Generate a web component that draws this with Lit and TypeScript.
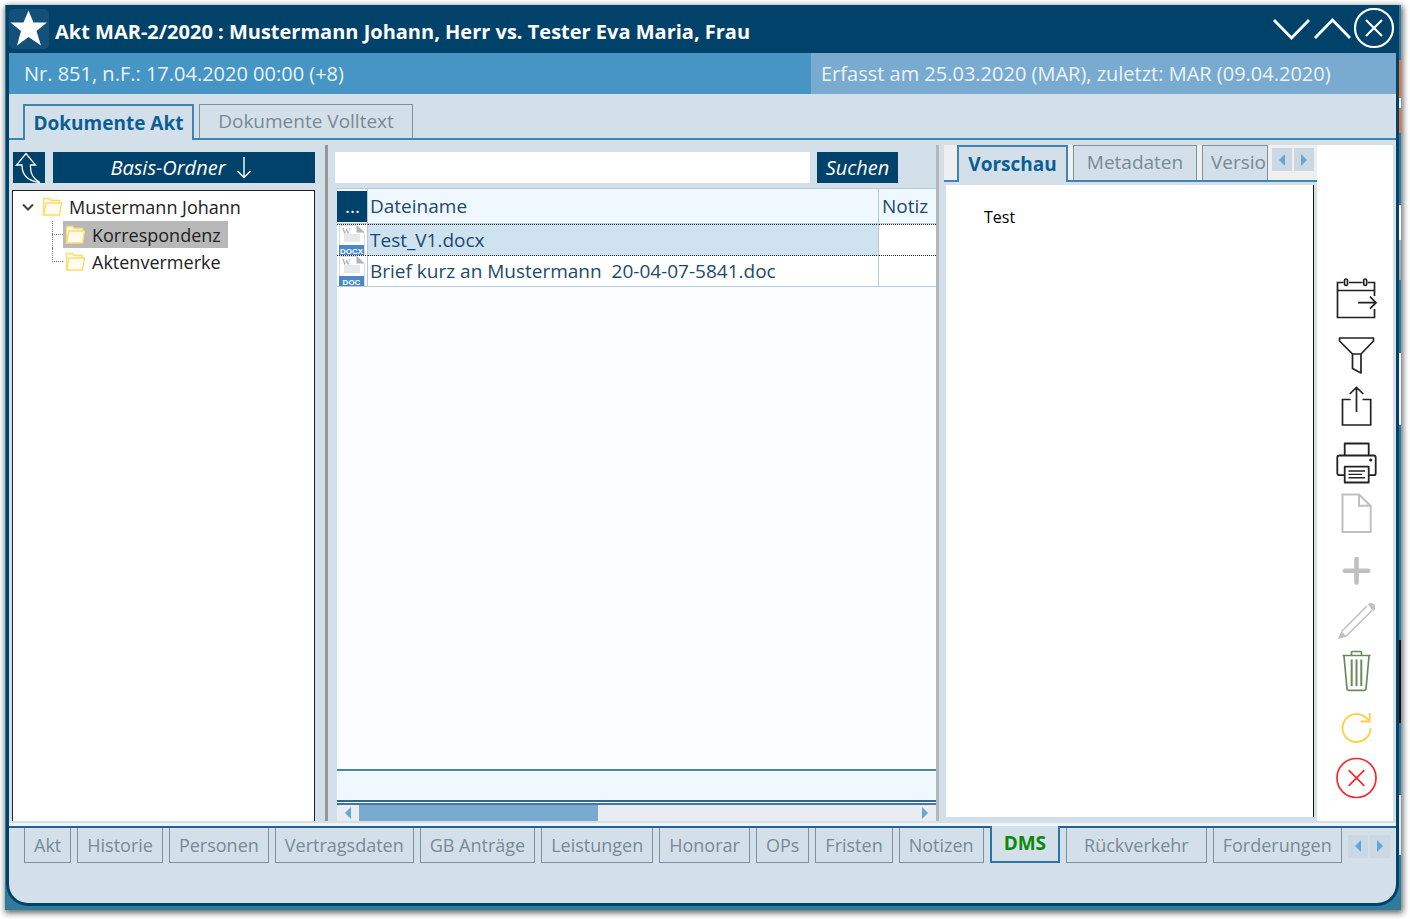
import { LitElement, html, css, svg } from "lit";
import { customElement, state } from "lit/decorators.js";
import { classMap } from "lit/directives/class-map.js";

const toolIcons = {
  calendar: svg`<g fill="none" stroke="#222" stroke-width="1.7"><path d="M12.5 9.500H6.500V44.500H43.500V36M18 9.500H31.500M37 9.500H43.500V23M6.500 17.500H43.500M27 29.700H45M39 23.700l6 6-6 6"/><rect x="13.500" y="6" width="3" height="6.500" rx="1.500"/><rect x="32.700" y="6" width="3" height="6.500" rx="1.500"/></g>`,
  filter: svg`<g fill="none" stroke="#222" stroke-width="1.700" stroke-linejoin="round"><path d="M8.500 8H42.500V11L30 24V43L21.500 38.500V24L8.500 11ZM21.500 24H30"/></g>`,
  share: svg`<g fill="none" stroke="#222" stroke-width="1.700"><path d="M19.700 19.500H11.500V45H39.700V19.500H31.500M25.500 32V7.500M18.700 14l6.800-6.500 6.800 6.500"/></g>`,
  print: svg`<g fill="none" stroke="#222" stroke-width="1.800" stroke-linejoin="round"><path d="M13.700 18.300V6.500H37.700V18.300M13.700 38.200H8.300a2 2 0 0 1-2-2V20.500a2 2 0 0 1 2-2H42.700a2 2 0 0 1 2 2V36.200a2 2 0 0 1-2 2H37.700"/><rect x="13.700" y="29.700" width="24" height="15.800"/><path d="M17.500 34H34M17.500 37.400H31M17.500 40.800H34" stroke-width="1.400"/></g><circle cx="39.700" cy="23" r="1.600" fill="#222"/>`,
  file: svg`<path d="M11.500 7.500H28L39.700 19V45H11.500ZM28 7.500V18.700H39.700" fill="none" stroke="#c0c0c0" stroke-width="2"/>`,
  add: svg`<path d="M25.500 15V38.500M13.800 26.700H37.200" fill="none" stroke="#c0c0c0" stroke-width="4.600" stroke-linecap="round"/>`,
  edit: svg`<path d="M10.500 37.500L36 12M14.700 42.500L41 16.500" fill="none" stroke="#c0c0c0" stroke-width="1.600"/><path d="M7 45l3.200-8 2.300 2.200 1.200 1.200 1.500 2.300ZM37 10.500c2.500-3.500 9.500 0 6.500 5.500l-1.500 1.500L39 13Z" fill="#c0c0c0"/>`,
  trash: svg`<g fill="none" stroke="#6c8a58" stroke-width="1.700"><path d="M11.500 11.500H39.700M20.500 11V8.500a1 1 0 0 1 1-1H29.500a1 1 0 0 1 1 1V11M13 12L16 45a1.500 1.500 0 0 0 1.500 1.300H33.500a1.500 1.500 0 0 0 1.500-1.300L38 12"/><path d="M20.700 15.500V42M25.500 15.500V42M30.300 15.500V42" stroke-width="2"/></g>`,
  refresh: svg`<path d="M39.500 27A14 14 0 1 1 35.500 17.200L38.500 20.200M38.700 12V20.500H29.500" fill="none" stroke="#fdd04c" stroke-width="1.900"/>`,
  cancel: svg`<g fill="none" stroke="#f8282c" stroke-width="1.700"><circle cx="25.500" cy="27" r="19.500"/><path d="M17.700 19.200L33.300 34.800M33.300 19.200L17.700 34.800"/></g>`,
};

const tools: { id: keyof typeof toolIcons; label: string; spaced?: boolean }[] = [
  { id: "calendar", label: "Frist" },
  { id: "filter", label: "Filter", spaced: true },
  { id: "share", label: "Export" },
  { id: "print", label: "Drucken", spaced: true },
  { id: "file", label: "Neu" },
  { id: "add", label: "Hinzu", spaced: true },
  { id: "edit", label: "Bearbeiten" },
  { id: "trash", label: "Entfernen" },
  { id: "refresh", label: "Aktualisieren", spaced: true },
  { id: "cancel", label: "Abbrechen" },
];

const sections = ["Akt", "Historie", "Personen", "Vertragsdaten", "GB Anträge", "Leistungen", "Honorar", "OPs", "Fristen", "Notizen", "DMS", "Rückverkehr", "Forderungen"];

const folder = html`<svg class="folder" viewBox="0 0 22 20" aria-hidden="true">
  <path d="M2.500 18V1.500H8.500L10.500 3.500H18.500V6" fill="#fffdf0" stroke="#ffdc66" stroke-width="1.400"/>
  <path d="M2.500 18L5 6H20.500L18.500 18Z" fill="#fffdf0" stroke="#ffdc66" stroke-width="1.400"/></svg>`;

const doc = (kind: string) => html`<svg class="doc" viewBox="0 0 26 30" role="img" aria-label=${kind}>
  <path d="M.5 30V.5H18L25.500 8V30" fill="#fff" stroke="#d8dde2"/>
  <path d="M17.500 0V7.500H25.500Z" fill="#aeb4b8"/>
  <rect x="5" y="9" width="16" height="8" fill="#e6e9e9"/>
  <text x="3" y="9" class="doc-w">W</text>
  <rect x="0" y="20" width="25" height="10" fill="#4a88cb"/>
  <text x="12.500" y="28.500" text-anchor="middle" class="doc-kind">${kind}</text></svg>`;

const pager = html`<div class="pager">
  <button aria-label="Zurück"><svg viewBox="0 0 6 12"><path d="M6 0V12L0 6Z"/></svg></button>
  <button aria-label="Weiter"><svg viewBox="0 0 6 12"><path d="M0 0V12L6 6Z"/></svg></button></div>`;

@customElement("app-root")
export class AppRoot extends LitElement {
  @state() private section = "DMS";

  static styles = css`
    :host { display: block; box-sizing: border-box; height: 100vh; min-height: 600px; padding: 5px 9px 9px 5px; background: #fff; font: 19px/26px "Open Sans", "Noto Sans", sans-serif; color: #1b4a70; }
    * { box-sizing: border-box; }
    button { font: inherit; color: inherit; border: 0; padding: 0; margin: 0; background: none; white-space: nowrap; }
    svg { display: block; }
    .backdrop { height: 100%; padding: 0 2px 4px 1px; box-shadow: 1px 2px 6px 1px rgba(0,0,0,.6);
      background: linear-gradient(#2f7c9b 55px, #f0702c 55px 93px, #fff 93px 103px, #f0702c 103px 128px, #2f7c9b 128px 200px, #fff 200px 235px, #9aa9b2 235px 275px, #2f7c9b 275px 348px, #f2f4f6 348px 420px, #2f7c9b 420px 635px, #111 635px 718px, #2f7c9b 718px 790px, #e2e7ec 790px 850px, #2f7c9b 850px) right / 2px 100% no-repeat, #2f7c9b; }
    .window { height: 100%; display: flex; flex-direction: column; border: solid #01426a; border-width: 0 3px 3px; border-radius: 0 0 22px 22px; background: #d4e0e9; overflow: hidden; }
    .title { flex: none; height: 48px; background: #01426a; display: flex; align-items: center; color: #fff; }
    .title h1 { flex: 1; margin: 6px 0 0 6px; font-size: 20px; font-weight: 700; line-height: 26px; white-space: nowrap; }
    .star { width: 40px; height: 40px; border-radius: 5px; background: #13507a; }
    .controls { display: flex; align-items: center; }
    .info { flex: none; display: grid; grid-template-columns: 802fr 585fr; height: 41px; line-height: 41px; font-size: 20px; color: #eaf4fc; background: #4695c5; }
    .info span { padding-left: 15px; white-space: nowrap; }
    .info span + span { background: #79abd1; padding-left: 10px; }
    .tabs { flex: none; display: flex; align-items: flex-end; gap: 5px; }
    .main-tabs { height: 46px; padding: 0 14px; border-bottom: 2px solid #3f85b2; }
    .tab { flex: none; border: 1px solid #80919c; border-bottom: 0; color: #788a96; text-align: center; }
    .main-tabs .tab { height: 34px; width: 214px; padding-bottom: 1px; }
    .main-tabs .tab.on { width: 171px; height: 36px; margin-bottom: -2px; }
    .tab.on { border: 2px solid #3f85b2; border-bottom: 0; background: #d4e0e9; color: #0b5e94; font-weight: 700; }
    .body { flex: 1; min-height: 0; display: flex; padding: 5px 3px 0 0; }
    .left { flex: none; width: 316px; padding: 7px 10px 0 3px; display: flex; flex-direction: column; gap: 7px; }
    .left-bar { display: flex; gap: 8px; padding-left: 1px; }
    .dark { height: 31px; background: #01426a; color: #fff; font-style: italic; font-size: 20px; }
    .up { width: 32px; }
    .base { flex: 1; display: flex; align-items: center; justify-content: center; gap: 10px; padding-right: 6px; }
    .tree { flex: 1; margin: 0; padding: 2px 0 0 8px; list-style: none; background: #fff; border: solid #222; border-width: 1px 1px 0; color: #222; font-size: 18px; }
    .tree ul { margin: 0; padding: 0 0 0 31px; list-style: none; }
    .node { display: flex; align-items: center; height: 27px; gap: 6px; }
    .tree > li > .node { height: 28px; }
    .node svg { flex: none; }
    .folder { width: 22px; height: 20px; }
    .branch { position: relative; display: flex; align-items: center; }
    .branch::before { content: ""; width: 11px; border-top: 1px dotted #777; }
    .branch::after { content: ""; position: absolute; left: 0; top: 0; height: 27px; border-left: 1px dotted #777; }
    .branch:last-child::after { height: 14px; }
    .branch .node { padding: 0 7px 0 1px; }
    .branch .node.sel { background: #b8b8b8; }
    .split { flex: none; width: 3px; background: #969696; }
    .split.soft { background: #b4b8bb; }
    .center { flex: 1; min-width: 0; padding: 7px 0 0 7px; display: flex; flex-direction: column; }
    .search { display: flex; gap: 7px; padding-right: 38px; margin-bottom: 5px; }
    .search input { flex: 1; min-width: 0; height: 31px; border: 0; padding: 0 6px; background: #fff; font: inherit; border-radius: 0; }
    .find { width: 81px; }
    .grid { flex: 1; min-height: 0; margin-left: 2px; background: #fbfcff; display: flex; flex-direction: column; }
    table { width: 100%; border-collapse: separate; border-spacing: 0; table-layout: fixed; }
    th, td { padding: 0 0 0 2px; text-align: left; font-weight: 400; height: 31px; border-right: 1px solid #b5cbdc; border-bottom: 1px solid #b5cbdc; background: #fff; white-space: nowrap; overflow: hidden; line-height: 26px; }
    th { background: #f0f8ff; height: 36px; border-top: 1px solid #b5cbdc; }
    th:last-child, td:last-child { border-right: 0; }
    th:first-child, td:first-child { width: 31px; padding: 0; }
    th:last-child { width: 57px; padding-left: 3px; }
    .file { white-space: pre; }
    .more { width: 31px; height: 31px; background: #01426a; color: #fff; display: block; }
    .active td { border-bottom: 1px dotted #222; border-top: 1px dotted #222; }
    .active .file { background: #cfe2f0; }
    .doc { width: 26px; height: 30px; margin-left: 2px; }
    .doc-w { font: 9px "Liberation Serif", serif; fill: #999; }
    .doc-kind { font: 700 8px "Liberation Sans", sans-serif; fill: #fff; }
    .sum { margin-top: auto; height: 33px; border-top: 2px solid #4b86a6; border-bottom: 2px solid #2e6796; background: #f0f8ff; }
    .scroll { height: 18px; margin-top: 1px; border-top: 2px solid #3f78a8; background: #e9edf2; display: flex; align-items: center; padding: 0 8px; gap: 8px; }
    .scroll svg { width: 6px; height: 12px; fill: #6ba5d0; }
    .track { flex: 1; align-self: stretch; }
    .thumb { width: 43%; height: 100%; background: #79abd1; }
    .right { flex: none; width: 378px; padding-left: 5px; display: flex; flex-direction: column; }
    .view-tabs { height: 37px; padding-left: 13px; background: #efefef; border-bottom: 2px solid #3f85b2; }
    .view-tabs .tab { background: #d4e0e9; height: 35px; width: 124px; padding-bottom: 2px; overflow: hidden; }
    .view-tabs .tab.on { width: 111px; height: 37px; margin-bottom: -2px; }
    .view-tabs .tab.cut { width: 66px; text-align: left; padding-left: 8px; }
    .pager { display: flex; gap: 2px; align-self: center; }
    .pager button { width: 20px; height: 23px; display: grid; place-items: center; background: #c9d8e3; }
    .pager svg { width: 6px; height: 12px; fill: #68a5d2; }
    .view-tabs .pager { margin: -6px 0 0 -1px; }
    .preview { flex: 1; margin: 3px 3px 4px 2px; padding: 21px 38px; background: #fff; border-right: 1px solid #111; color: #000; font-size: 16px; line-height: 22px; }
    .tools { flex: none; width: 76px; background: #fff; padding: 128px 0 0 14px; }
    .tools button { display: block; }
    .tools button.spaced { margin-top: 7px; }
    .tools svg { width: 50px; height: 50px; }
    .bottom { flex: none; height: 80px; margin-top: 2px; border-top: 3px solid #eef4fa; font-size: 18px; }
    .bottom-tabs { border-top: 2px solid #24618f; padding: 0 3px 0 15px; align-items: flex-start; gap: 6px; }
    .bottom-tabs .tab { border: 1px solid #80919c; border-top: 0; height: 35px; padding: 0 9px; line-height: 35px; }
    .bottom-tabs .tab.on { color: #0a8a0a; border: 2px solid #2f73a6; border-top: 0; margin-top: -2px; height: 37px; padding: 0 12px; font-size: 19px; }
    .bottom-tabs .tab.wide { padding: 0 17px; }
    .bottom-tabs .pager { margin-top: 1px; }
  `;

  render() {
    return html`<div class="backdrop"><main class="window">
      <header class="title">
        <svg class="star" viewBox="0 0 40 40" aria-hidden="true"><path d="M19.500 1.500L24.500 13.500H38L27.500 22L32 36.500L19.500 28L8 36.500L12 22L1.500 13.500H14.500Z" fill="#fff"/></svg>
        <h1>Akt MAR-2/2020 : Mustermann Johann, Herr vs. Tester Eva Maria, Frau</h1>
        <div class="controls">
          <button aria-label="Minimieren"><svg width="41" height="42"><path d="M2 12L19.500 30 37 12" fill="none" stroke="#fff" stroke-width="2.800"/></svg></button>
          <button aria-label="Maximieren"><svg width="41" height="42"><path d="M2 30L19.500 12 37 30" fill="none" stroke="#fff" stroke-width="2.800"/></svg></button>
          <button aria-label="Fenster zu"><svg width="42" height="42"><g fill="none" stroke="#fff" stroke-width="2.200"><circle cx="20" cy="20" r="19"/><path d="M12 12l16 16M28 12L12 28"/></g></svg></button>
        </div>
      </header>
      <div class="info"><span>Nr. 851, n.F.: 17.04.2020 00:00 (+8)</span><span>Erfasst am 25.03.2020 (MAR), zuletzt: MAR (09.04.2020)</span></div>
      <nav class="tabs main-tabs"><button class="tab on">Dokumente Akt</button><button class="tab">Dokumente Volltext</button></nav>
      <div class="body">
        <section class="left">
          <div class="left-bar">
            <button class="dark up" aria-label="Ordner hoch"><svg width="32" height="31"><path d="M13 1.500L3.500 13H9C9 22 14 29 27 30.500C20 27 17 21 17.500 13H22.500Z" fill="none" stroke="#fff" stroke-width="1.300"/></svg></button>
            <button class="dark base">Basis-Ordner<svg width="16" height="22"><path d="M8 0V20M1.500 14L8 20.500 14.500 14" fill="none" stroke="#fff" stroke-width="1.400"/></svg></button>
          </div>
          <ul class="tree">
            <li><div class="node"><svg width="14" height="10"><path d="M2 2.500L7 7.500 12 2.500" fill="none" stroke="#444" stroke-width="2"/></svg>${folder}<span>Mustermann Johann</span></div>
              <ul>
                <li class="branch"><div class="node sel">${folder}<span>Korrespondenz</span></div></li>
                <li class="branch"><div class="node">${folder}<span>Aktenvermerke</span></div></li>
              </ul></li>
          </ul>
        </section>
        <div class="split"></div>
        <section class="center">
          <form class="search" @submit=${(e: Event) => e.preventDefault()}><input type="text" aria-label="Suchbegriff"><button class="dark find">Suchen</button></form>
          <div class="grid">
            <table>
              <thead><tr><th><button class="more">...</button></th><th>Dateiname</th><th>Notiz</th></tr></thead>
              <tbody>
                <tr class="active"><td>${doc("DOCX")}</td><td class="file">Test_V1.docx</td><td></td></tr>
                <tr><td>${doc("DOC")}</td><td class="file">Brief kurz an Mustermann  20-04-07-5841.doc</td><td></td></tr>
              </tbody>
            </table>
            <div class="sum"></div>
            <div class="scroll"><svg viewBox="0 0 6 12"><path d="M6 0V12L0 6Z"/></svg><div class="track"><div class="thumb"></div></div><svg viewBox="0 0 6 12"><path d="M0 0V12L6 6Z"/></svg></div>
          </div>
        </section>
        <div class="split soft"></div>
        <section class="right">
          <nav class="tabs view-tabs"><button class="tab on">Vorschau</button><button class="tab">Metadaten</button><button class="tab cut">Versio</button>${pager}</nav>
          <article class="preview">Test</article>
        </section>
        <aside class="tools">${tools.map((t) => html`<button class=${classMap({ spaced: !!t.spaced })} aria-label=${t.label}><svg viewBox="0 0 50 50">${toolIcons[t.id]}</svg></button>`)}</aside>
      </div>
      <footer class="bottom"><nav class="tabs bottom-tabs">
        ${sections.map((s) => html`<button class=${classMap({ tab: true, on: s === this.section, wide: s === "Rückverkehr" })} @click=${() => (this.section = s)}>${s}</button>`)}${pager}
      </nav></footer>
    </main></div>`;
  }
}
